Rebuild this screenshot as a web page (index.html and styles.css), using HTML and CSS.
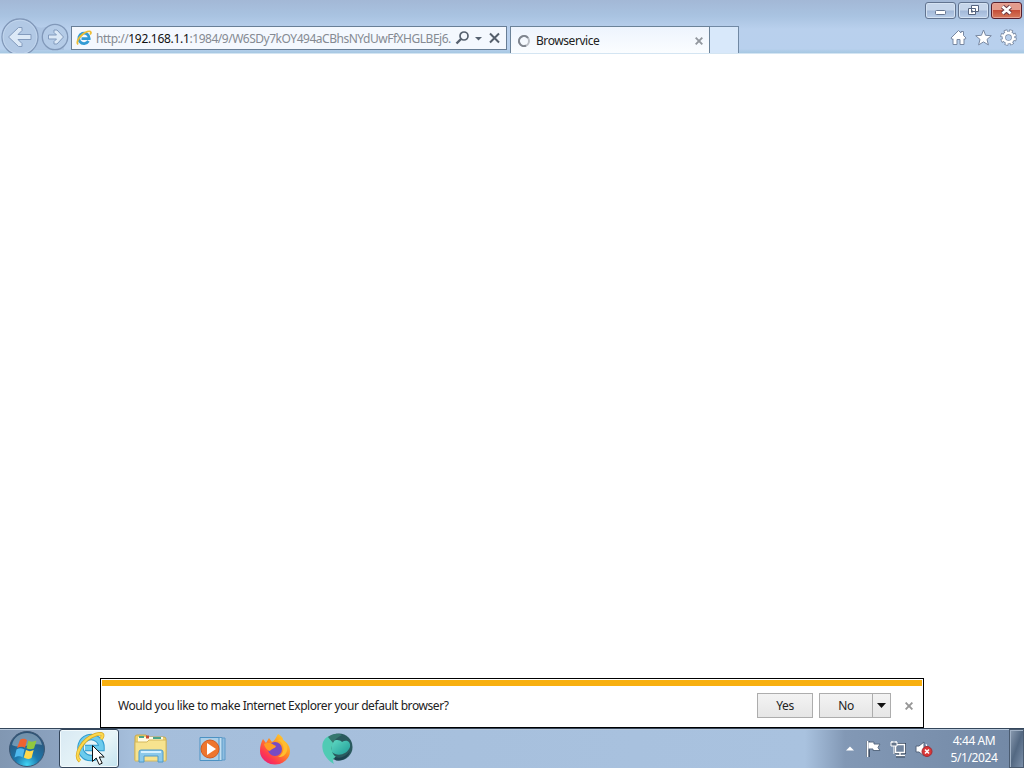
FILE: index.html
```html
<!DOCTYPE html>
<html lang="en">
<head>
    <meta charset="UTF-8">
    <meta name="viewport" content="width=device-width, initial-scale=1.0">
    <title>Browservice</title>
    <link rel="stylesheet" href="styles.css">
</head>
<body>
    <header class="chrome">
        <svg class="nav" width="71" height="35" viewBox="0 0 71 35">
            <path d="M34 7 Q39 11 45 9 L64 9 L64 32 L34 32Z" fill="#a0b8d8" opacity=".5"/>
            <circle cx="20" cy="19" r="18" fill="#b2c9e5" stroke="#8198b9" stroke-width="1.3"/>
            <circle cx="20" cy="19" r="16.8" fill="none" stroke="#c5d8ef" stroke-width=".8"/>
            <circle cx="55" cy="19" r="12.7" fill="#b4cbe7" stroke="#8198b9" stroke-width="1.3"/>
            <path d="M8.500 19 L18.500 9.500 L22 9.500 L22 12.500 L18 16.500 L31 16.500 L31 21.500 L18 21.500 L22 25.500 L22 28.500 L18.500 28.500Z" fill="#dce9f7" stroke="#839bbd"/>
            <path d="M63.500 19 L57 12 L54 12 L54 14.500 L56.500 17 L48.500 17 L48.500 21 L56.500 21 L54 23.500 L54 26 L57 26Z" fill="#dce9f7" stroke="#839bbd"/>
        </svg>
        <div class="top">
            <div class="caption">
                <button class="cap-button"><svg width="31" height="17"><rect x="10.500" y="8.500" width="10" height="4" rx="1" fill="#fff" stroke="#66758f"/></svg></button>
                <button class="cap-button"><svg width="31" height="17"><path d="M13.500 3.500h7v6h-7zM10.500 6.500h7v6h-7z" fill="#fff" stroke="#56657f"/><path d="M13 9.500h2" stroke="#56657f" stroke-width="2"/></svg></button>
                <button class="cap-button close"><svg width="31" height="17"><path d="M11.500 4.500l8 7M19.500 4.500l-8 7" stroke="#683943" stroke-width="4.500"/><path d="M11.500 4.500l8 7M19.500 4.500l-8 7" stroke="#fff" stroke-width="2.600"/></svg></button>
            </div>
            <div class="bar">
                <div class="address">
                    <svg width="16" height="16" viewBox="0 0 32 32">
                        <path d="M25 22 A10.500 10.500 0 1 1 26.500 17 H11" fill="none" stroke="#329bd4" stroke-width="5.500"/>
                        <path d="M4 29 C-1 23 10 7 23 3 C31 1 31 6 28 9" fill="none" stroke="#edbd34" stroke-width="3.500"/>
                    </svg>
                    <span class="url">http://<b>192.168.1.1</b>:1984/9/W6SDy7kOY494aCBhsNYdUwFfXHGLBEj6.</span>
                    <svg width="48" height="22">
                        <circle cx="10" cy="9" r="4" fill="none" stroke="#56616f" stroke-width="1.700"/>
                        <path d="M7 12l-4.500 4.500" stroke="#56616f" stroke-width="2.400"/>
                        <path d="M21 10h7l-3.500 3.500z" fill="#56616f"/>
                        <path d="M36 6.500l9 9M45 6.500l-9 9" stroke="#555f6c" stroke-width="2"/>
                    </svg>
                </div>
                <div class="tab">
                    <svg width="14" height="14"><circle cx="7" cy="7" r="5" fill="none" stroke="#b9bdc4" stroke-width="2"/><path d="M11 4A5 5 0 1 0 9 11.600" fill="none" stroke="#7f858e" stroke-width="2"/></svg>
                    <span class="tab-title">Browservice</span>
                    <svg width="8" height="8"><path d="M.7.7l6.600 6.600M7.300.7L.7 7.300" stroke="#92979e" stroke-width="1.900"/></svg>
                </div>
                <div class="new-tab"></div>
                <div class="tools">
                    <svg width="17" height="17"><path d="M1 9L8.500 1.500 11 4V2.500h2.500V6.500L16 9l-1 1.500-1-.7V15.500h-4V10.500h-3v5H3V9.800l-1 .7z" fill="#fff" stroke="#7888a2"/></svg>
                    <svg width="17" height="17"><path d="M8.500 1l2.100 5.300 5.700.4-4.300 3.700 1.400 5.500-4.900-3-4.900 3L5 10.400.7 6.700l5.700-.4z" fill="#fff" stroke="#7888a2"/></svg>
                    <svg width="17" height="17"><circle cx="8.500" cy="8.500" r="6.300" fill="none" stroke="#7888a2" stroke-width="4" stroke-dasharray="3.200 1.748"/><circle cx="8.500" cy="8.500" r="4.700" fill="none" stroke="#7888a2" stroke-width="4.200"/><circle cx="8.500" cy="8.500" r="6.300" fill="none" stroke="#fff" stroke-width="2.400" stroke-dasharray="2 2.948" stroke-dashoffset="-.6"/><circle cx="8.500" cy="8.500" r="4.600" fill="none" stroke="#fff" stroke-width="2.600"/></svg>
                </div>
            </div>
        </div>
    </header>

    <main class="page">
        <div class="notice">
            <span class="question">Would you like to make Internet Explorer your default browser?</span>
            <button class="button">Yes</button>
            <div class="split">
                <button class="button no">No</button>
                <button class="button arrow"><svg width="9" height="5"><path d="M0 0h9L4.500 5z" fill="#111"/></svg></button>
            </div>
            <svg width="8" height="8"><path d="M.6.600l6.800 6.800M7.400.600L.6 7.400" stroke="#969696" stroke-width="1.900"/></svg>
        </div>
    </main>

    <footer class="taskbar">
        <div class="start">
            <svg width="38" height="38" viewBox="0 0 38 38">
                <defs>
                    <radialGradient id="orb" cx="50%" cy="95%" r="85%">
                        <stop offset="0" stop-color="#42d5f5"/><stop offset=".4" stop-color="#1c78ad"/><stop offset="1" stop-color="#2c5276"/>
                    </radialGradient>
                </defs>
                <circle cx="19" cy="19" r="17.500" fill="url(#orb)" stroke="#3c5672"/>
                <path d="M4 15C7 -1 31 -1 34 15C25 12 13 20 4 15" fill="#b8d0df" opacity=".5"/>
                <path d="M12 10c3-2 5-1 7 0l-2 8c-3-2-5-1-8 0z" fill="#ef6331"/>
                <path d="M20.500 10.500c3 2 5 1 8 0l-2.500 8c-3 1-5 1-7.500-.3z" fill="#91c83e"/>
                <path d="M8.500 19.500c3-1.600 5-1.400 8 0l-2 8c-3-2-5-1-8 0z" fill="#4fb9ee"/>
                <path d="M18 20c3 1.600 5 1.400 7.700 0l-2.200 8c-3 1.500-5 1-7.700-.4z" fill="#ffd94b"/>
            </svg>
        </div>
        <div class="task active">
            <svg width="44" height="38" viewBox="0 0 44 38">
                <path d="M33 23A10.500 10.500 0 1 1 34.500 18H18" fill="none" stroke="#2f9bce" stroke-width="6.500"/>
                <path d="M33 23A10.500 10.500 0 1 1 34.500 18H18" fill="none" stroke="#6ccbed" stroke-width="4.500"/>
                <path d="M13 31C6 26 15 9 29 4.500C36 2.500 37 5 34 9" fill="none" stroke="#d9a51c" stroke-width="3.600"/>
                <path d="M13 31C6 26 15 9 29 4.500C36 2.500 37 5 34 9" fill="none" stroke="#fad84f" stroke-width="2.300"/>
                <path d="M25.500 15.500v16l3.700-3.500 3 6.500 3-1.300-3-6.200h5z" fill="#fff" stroke="#111"/>
            </svg>
        </div>
        <div class="task">
            <svg width="34" height="30" viewBox="0 0 34 30">
                <path d="M1 26V3q0-2 2-2h9l2 2h16q2 0 2 2v21z" fill="#edd26c" stroke="#c6a751"/>
                <path d="M4 3h25v7H4z" fill="#fffbe4"/>
                <path d="M5 3h5M19 4h8" stroke="#4ba58a" stroke-width="2"/><path d="M12 3h3" stroke="#c84c34" stroke-width="3"/>
                <path d="M1 8h12l2-2h17v21H1z" fill="#f7e38f" stroke="#d5b85d"/>
                <path d="M5 28V18q0-2 2-2h20q2 0 2 2v10h-5v-6H10v6z" fill="#8bc9eb" stroke="#4e9aca"/>
                <path d="M7 18h20" stroke="#d6f1ff" stroke-width="2"/>
            </svg>
        </div>
        <div class="task">
            <svg width="28" height="26" viewBox="0 0 28 26">
                <path d="M9 2h17v22H9z" fill="#8ebde0" stroke="#5f9bca"/><path d="M6 1.500h17v23H6z" fill="#c2dff1" stroke="#5c9bc7"/>
                <path d="M1 1.500h19v23H1z" fill="#acd0e9" stroke="#4c92c3"/>
                <circle cx="11" cy="13" r="9" fill="#ee762e" stroke="#d35b20"/>
                <path d="M8 7l9 6-9 6z" fill="#fff"/>
            </svg>
        </div>
        <div class="task">
            <svg width="32" height="32" viewBox="0 0 32 32">
                <defs>
                    <linearGradient id="fire" x1="1" y1="0" x2=".2" y2="1">
                        <stop offset="0" stop-color="#ffe638"/><stop offset=".45" stop-color="#ff8f20"/><stop offset=".8" stop-color="#ff3850"/><stop offset="1" stop-color="#e52178"/>
                    </linearGradient>
                </defs>
                <path d="M19 1c3 2 5 3 5 6 5 3 7 7 7 11A15 13.500 0 0 1 1 18C1 13 2 10 4 6l3 4 3-5 3 4c2-1 4-4 6-8z" fill="url(#fire)"/>
                <circle cx="16" cy="16" r="7" fill="#784bc4"/>
                <path d="M5 11c5-3 8 0 12 2-1 3-4 2-6 5-2 0-5-3-6-7z" fill="#ff9b25"/>
                <path d="M18 7c8 2 9 13 1 17 10 1 13-12 4-18z" fill="#ffbd2e"/>
            </svg>
        </div>
        <div class="task">
            <svg width="34" height="34" viewBox="0 0 34 34">
                <defs>
                    <linearGradient id="teal" x1="0" y1="0" x2="1" y2="1">
                        <stop offset="0" stop-color="#5fd8c2"/><stop offset="1" stop-color="#1f9c97"/>
                    </linearGradient>
                </defs>
                <circle cx="19" cy="15" r="13.500" fill="#2a5a5e"/>
                <path d="M9 4C-1 8 0 24 14 32C12 28 13 26 16 25C10 21 11 12 15 8C13 5 11 4 9 4z" fill="#50cbb4"/>
                <path d="M12 14C12 7 19 7 22 10C27 7 31 10 30 15C27 23 17 25 12 20z" fill="url(#teal)"/>
                <path d="M8 5c5-4 10-4 14-2-4 2-7 4-9 8z" fill="#35776f"/>
                <path d="M15 25c5 2 11 0 15-6-2 7-8 11-15 9z" fill="#1c4250"/>
            </svg>
        </div>
        <div class="tray">
            <svg width="8" height="5"><path d="M0 4.500L4 .5l4 4z" fill="#fff"/></svg>
            <svg class="flag" width="17" height="18"><path d="M3 1v16" stroke="#42536b" stroke-width="4"/><path d="M3 2h6v2h6l-2 3.500 2 3H8V9H3z" fill="#fff" stroke="#596b82"/><path d="M2.500 1v16" stroke="#fff" stroke-width="1.600"/></svg>
            <svg width="17" height="18"><path d="M5.500 4.500h9v8h-9zM10 13v3M6 16h9" fill="#62758f" stroke="#33445b" stroke-width="3"/><path d="M5.500 4.500h9v8h-9zM10 13v3M6 15.500h9" fill="#71849e" stroke="#fff" stroke-width="1.400"/><path d="M1 2h6v4H1zM4 6v8M2 1v2M6 1v2" fill="#65758b" stroke="#fff"/></svg>
            <svg width="18" height="18"><path d="M1 6h3l5-4v14l-5-4H1z" fill="#fff" stroke="#54657c"/><path d="M11 4q2 3 1 7" fill="none" stroke="#fff"/><circle cx="12" cy="11.500" r="5" fill="#d93636" stroke="#a42b34"/><path d="M10 9.500l4 4M14 9.500l-4 4" stroke="#fff" stroke-width="1.600"/></svg>
            <div class="clock"><span>4:44 AM</span><span>5/1/2024</span></div>
        </div>
        <div class="desktop"></div>
    </footer>
</body>
</html>
```

FILE: styles.css
```css
* {
    box-sizing: border-box;
}
body {
    margin: 0;
    height: 768px;
    display: flex;
    flex-direction: column;
    overflow: hidden;
    font-family: "Noto Sans", "Open Sans", sans-serif;
    font-size: 12px;
    letter-spacing: -0.43px;
    color: #222;
    background-color: white;
}
svg {
    display: block;
    flex-shrink: 0;
}
button {
    font: inherit;
    letter-spacing: inherit;
    color: inherit;
    padding: 0;
}
.chrome {
    height: 54px;
    display: flex;
    align-items: flex-end;
    background: linear-gradient(#a3b8d6, #a9c3e1 30%, #b9d0ed 55%, #b8d0ed 92%, #a6c8e2);
    border-bottom: 1px solid #d4e5f2;
}
.top {
    flex: 1;
    height: 53px;
    display: flex;
    flex-direction: column;
}
.caption {
    height: 26px;
    display: flex;
    justify-content: flex-end;
    gap: 2px;
    padding: 2px 2px 0 0;
}
.cap-button {
    width: 31px;
    height: 17px;
    border: 1px solid #61738f;
    border-radius: 3px;
    background: linear-gradient(#c5d5ea 48%, #a2b8d7 52%, #b9cee9);
    box-shadow: inset 0 0 0 1px #d4e2f2;
}
.cap-button svg {
    margin: -1px;
}
.close {
    border-color: #571f2c;
    background: linear-gradient(#e39c8d 45%, #c64e38 50%, #d57a5c);
    box-shadow: inset 0 0 0 1px #e6a396;
}
.bar {
    height: 27px;
    display: flex;
}
.address {
    width: 436px;
    height: 24px;
    display: flex;
    align-items: center;
    padding-left: 4px;
    margin-right: 3px;
    border: 1px solid #687e96;
    background-color: #f4f8fe;
}
.url {
    width: 358px;
    margin-left: 4px;
    letter-spacing: -0.48px;
    color: #858a92;
    white-space: nowrap;
}
.url b {
    font-weight: normal;
    letter-spacing: -0.3px;
    color: #111;
}
.tab {
    width: 200px;
    display: flex;
    align-items: center;
    padding: 1px 6px 0;
    border: 1px solid #6b8298;
    border-bottom: none;
    background: linear-gradient(#eef4fd, #fbfdff);
}
.tab-title {
    flex: 1;
    margin-left: 5px;
}
.new-tab {
    width: 29px;
    border: 1px solid #7189a4;
    border-width: 1px 1px 0 0;
    background-color: #d8e8fa;
}
.tools {
    flex: 1;
    display: flex;
    justify-content: flex-end;
    gap: 8px;
    padding: 3px 7px 0 0;
}
.page {
    flex: 1;
    display: flex;
    justify-content: center;
    align-items: flex-end;
}
.notice {
    width: 824px;
    height: 50px;
    display: flex;
    align-items: center;
    padding: 5px 10px 0 17px;
    border: 1px solid black;
    background: linear-gradient(#f8b010, #f8b010) 1px 1px / 820px 6px no-repeat white;
}
.question {
    flex: 1;
}
.button {
    width: 56px;
    height: 25px;
    border: 1px solid #adadad;
    background: linear-gradient(#f3f3f3, #e6e6e6);
}
.split {
    display: flex;
    margin: 0 14px 0 6px;
}
.no {
    width: 54px;
}
.arrow {
    width: 19px;
    margin-left: -1px;
    display: flex;
    align-items: center;
    justify-content: center;
}
.taskbar {
    height: 40px;
    display: flex;
    border-top: 1px solid #34465b;
    box-shadow: inset 0 1px #b8c9dc;
    background: linear-gradient(90deg, #8197b2, #8ca3c0 60px, #a5bedb 130px, #a9c2df 805px, #8298b5 845px, #7288a5);
}
.start {
    width: 59px;
    padding: 1px 0 0 8px;
}
.task {
    width: 62px;
    padding-left: 2px;
    display: flex;
    align-items: center;
    justify-content: center;
}
.active {
    width: 60px;
    padding-left: 0;
    border: 1px solid #34465b;
    border-radius: 3px;
    background: linear-gradient(135deg, #d8e9f3, #e8f5f8 60%, #c3e3ef);
    box-shadow: inset 0 0 0 1px #f2fafd;
}
.tray {
    flex: 1;
    display: flex;
    align-items: center;
    justify-content: flex-end;
    gap: 8px;
}
.flag {
    margin-left: 3px;
}
.clock {
    width: 66px;
    height: 34px;
    margin-right: 2px;
    display: flex;
    flex-direction: column;
    align-items: center;
    line-height: 17px;
    letter-spacing: -0.4px;
    color: white;
}
.desktop {
    width: 15px;
    border: 1px solid #4a5b70;
    background: linear-gradient(110deg, #8c9db2, #536882 50%, #7c90aa);
    box-shadow: inset 1px 1px #a1b2c6;
}
```
